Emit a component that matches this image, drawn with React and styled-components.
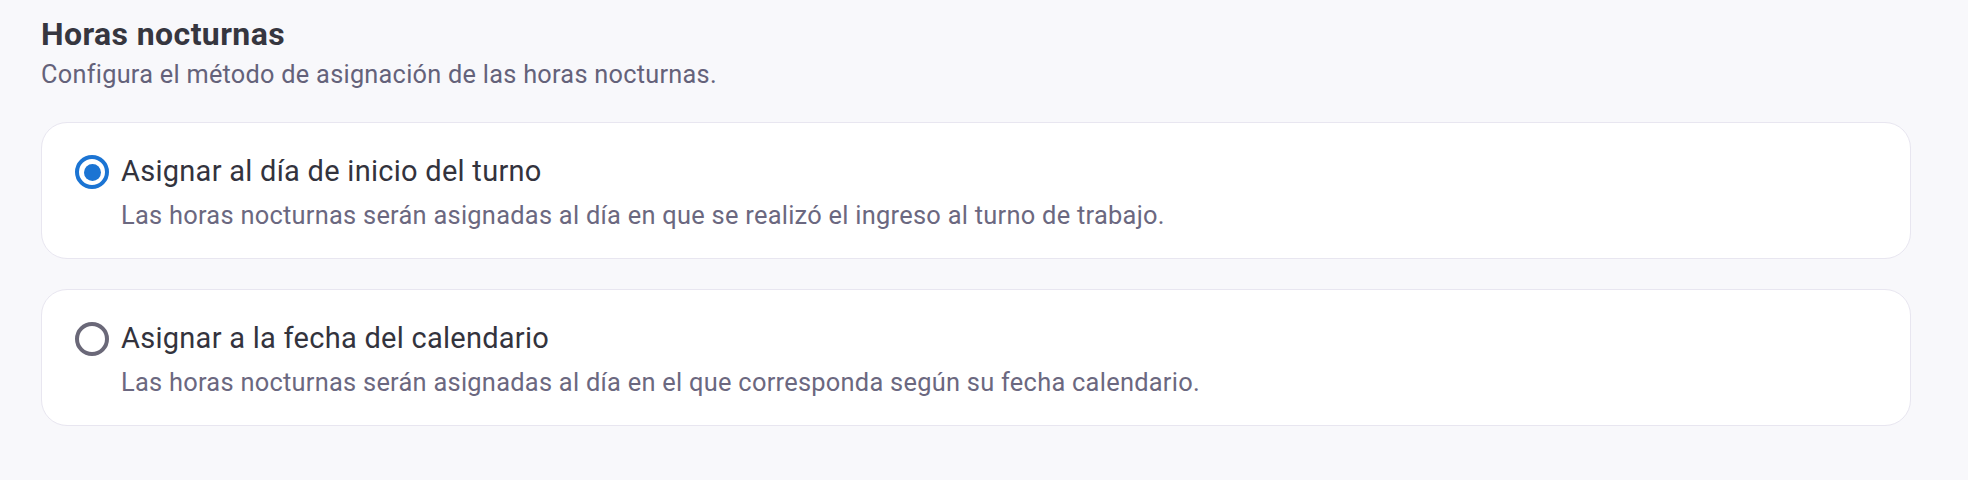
import React, { useState } from "react";
import styled, { createGlobalStyle } from "styled-components";

const GlobalStyle = createGlobalStyle`
  html, body {
    margin: 0;
    padding: 0;
    background: #f8f8fb;
    font-family: Roboto, "Noto Sans", "Liberation Sans", sans-serif;
    -webkit-font-smoothing: antialiased;
  }
  * { box-sizing: border-box; }
`;

const Page = styled.div`
  width: 1968px;
  height: 480px;
  background: #f8f8fb;
  padding: 14px 57px 0 41px;
`;

const Title = styled.h2`
  margin: 0;
  font-size: 32px;
  line-height: 40px;
  font-weight: 700;
  color: #36363f;
  letter-spacing: 0.4px;
`;

const Subtitle = styled.p`
  margin: 3px 0 0;
  font-size: 25.3px;
  line-height: 36px;
  font-weight: 400;
  color: #64627a;
  letter-spacing: 0.27px;
`;

const Options = styled.div`
  display: flex;
  flex-direction: column;
  gap: 30px;
  margin-top: 29px;
`;

const Card = styled.label`
  display: flex;
  align-items: flex-start;
  gap: 12px;
  height: 137px;
  padding: 27px 32px 22px 33px;
  background: #ffffff;
  border: 1px solid #e8e6f0;
  border-radius: 26px;
  cursor: pointer;
`;

const RadioCircle = styled.span`
  flex: none;
  width: 34px;
  height: 34px;
  margin-top: 5px;
  border-radius: 50%;
  border: 4px solid ${(p) => (p.$checked ? "#1b74d3" : "#6a6878")};
  display: flex;
  align-items: center;
  justify-content: center;

  &::after {
    content: "";
    width: 17px;
    height: 17px;
    border-radius: 50%;
    background: #1b74d3;
    display: ${(p) => (p.$checked ? "block" : "none")};
  }
`;

const Texts = styled.div`
  display: flex;
  flex-direction: column;
  gap: 4px;
`;

const Label = styled.span`
  font-size: 29px;
  line-height: 43px;
  color: #33333d;
  letter-spacing: 0.27px;
`;

const Desc = styled.span`
  font-size: 25.4px;
  line-height: 36px;
  color: #6b6880;
  letter-spacing: 0.27px;
`;

const options = [
  {
    id: "inicio",
    label: "Asignar al día de inicio del turno",
    desc: "Las horas nocturnas serán asignadas al día en que se realizó el ingreso al turno de trabajo.",
  },
  {
    id: "calendario",
    label: "Asignar a la fecha del calendario",
    desc: "Las horas nocturnas serán asignadas al día en el que corresponda según su fecha calendario.",
  },
];

export default function App() {
  const [value, setValue] = useState("inicio");
  return (
    <>
      <GlobalStyle />
      <Page>
        <Title>Horas nocturnas</Title>
        <Subtitle>Configura el método de asignación de las horas nocturnas.</Subtitle>
        <Options>
          {options.map((o) => (
            <Card key={o.id} onClick={() => setValue(o.id)}>
              <RadioCircle $checked={value === o.id} />
              <Texts>
                <Label>{o.label}</Label>
                <Desc>{o.desc}</Desc>
              </Texts>
            </Card>
          ))}
        </Options>
      </Page>
    </>
  );
}
